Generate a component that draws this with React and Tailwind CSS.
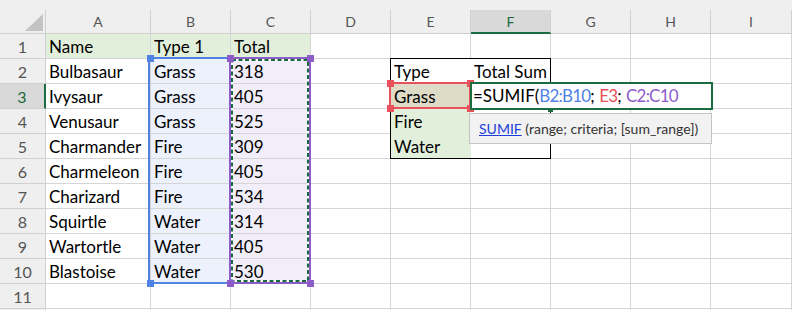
import React from 'react';

const COLS = ['A', 'B', 'C', 'D', 'E', 'F', 'G', 'H', 'I'];

const pokemon = [
  ['Name', 'Type 1', 'Total'],
  ['Bulbasaur', 'Grass', '318'],
  ['Ivysaur', 'Grass', '405'],
  ['Venusaur', 'Grass', '525'],
  ['Charmander', 'Fire', '309'],
  ['Charmeleon', 'Fire', '405'],
  ['Charizard', 'Fire', '534'],
  ['Squirtle', 'Water', '314'],
  ['Wartortle', 'Water', '405'],
  ['Blastoise', 'Water', '530'],
];

const summary = { '2-4': 'Type', '2-5': 'Total Sum', '3-4': 'Grass', '4-4': 'Fire', '5-4': 'Water' };

const cellInfo = (r, c) => {
  let text = '';
  if (r <= 10 && c <= 2) text = pokemon[r - 1][c];
  if (summary[`${r}-${c}`]) text = summary[`${r}-${c}`];

  let bg = 'bg-white';
  if (r === 1 && c <= 2) bg = 'bg-[#e2efda]';
  else if (c === 1 && r >= 2 && r <= 10) bg = 'bg-[#edf1fc]';
  else if (c === 2 && r >= 2 && r <= 10) bg = 'bg-[#f1eef9]';
  else if (c === 4 && r === 3) bg = 'bg-[#dedbc6]';
  else if (c === 4 && (r === 4 || r === 5)) bg = 'bg-[#e2efda]';

  const noGrid = (c === 4 || c === 5) && r >= 2 && r <= 5;
  return { text, bg, noGrid };
};

// selection frame centred on grid lines (x1,y1)-(x2,y2)
const Frame = ({ x1, y1, x2, y2, color, handles, children }) => (
  <>
    <div
      className={`absolute border-2 ${color.border}`}
      style={{ left: x1 - 1, top: y1 - 1, width: x2 - x1 + 2, height: y2 - y1 + 2 }}
    >
      {children}
    </div>
    {handles.map(([x, y], i) => (
      <div key={i} className={`absolute w-[7px] h-[7px] ${color.bg}`} style={{ left: x - 3, top: y - 3 }} />
    ))}
  </>
);

const Marquee = ({ w, h }) => (
  <svg className="absolute left-0 top-0" width={w} height={h}>
    <rect x="1" y="1" width={w - 2} height={h - 2} fill="none" stroke="#ffffff" strokeWidth="2" />
    <rect x="1" y="1" width={w - 2} height={h - 2} fill="none" stroke="#1a6a3d" strokeWidth="2" strokeDasharray="4 2.5" />
  </svg>
);

export default function App() {
  const rows = Array.from({ length: 12 }, (_, i) => i + 1);

  return (
    <div className="relative w-[792px] h-[310px] overflow-hidden bg-white font-['Lato',sans-serif] text-black">
      <div className="grid grid-cols-[46px_105px_repeat(7,80px)_81px]">
        {/* corner */}
        <div className="h-[34px] bg-[#efefef] flex flex-col">
          <div className="h-[10px]" />
          <div className="relative h-[24px] border-r border-b border-[#d0d0d0]">
            <svg className="absolute left-0 top-0" width="46" height="24">
              <polygon points="43,4 43,21 25,21" fill="#c3c3c3" />
            </svg>
          </div>
        </div>
        {COLS.map((col) => {
          const active = col === 'F';
          return (
            <div key={col} className="h-[34px] bg-[#efefef] flex flex-col">
              <div className="h-[10px]" />
              <div
                className={`h-[24px] flex items-center justify-center text-[14px] border-r border-r-[#d0d0d0] ${
                  active ? 'bg-[#d9d9d9] text-[#1d6b40] border-b-2 border-b-[#1d6b40]' : 'text-[#555555] border-b border-b-[#d0d0d0]'
                }`}
              >
                {col}
              </div>
            </div>
          );
        })}

        {rows.map((r) => (
          <React.Fragment key={r}>
            <div
              className={`h-[25px] flex items-end justify-center pb-[1px] text-[16px] leading-[21px] border-b border-b-[#d0d0d0] ${
                r === 3
                  ? 'bg-[#d9d9d9] text-[#1d6b40] border-r-2 border-r-[#1d6b40]'
                  : 'bg-[#efefef] text-[#555555] border-r border-r-[#d0d0d0]'
              }`}
            >
              {r <= 11 ? r : ''}
            </div>
            {COLS.map((col, c) => {
              const { text, bg, noGrid } = cellInfo(r, c);
              return (
                <div
                  key={col}
                  className={`h-[25px] flex items-end pl-[3px] pb-[1px] whitespace-nowrap text-[17px] leading-[21px] border-r border-b ${bg} ${
                    noGrid ? 'border-transparent' : 'border-[#d5d5d5]'
                  }`}
                >
                  {text}
                </div>
              );
            })}
          </React.Fragment>
        ))}
      </div>

      {/* E2:F5 outline */}
      <div className="absolute left-[390px] top-[58px] w-[161px] h-[101px] border border-black" />

      {/* B2:B10 reference */}
      <Frame
        x1={149}
        y1={58}
        x2={230}
        y2={283}
        color={{ border: 'border-[#4f82e3]', bg: 'bg-[#4f82e3]' }}
        handles={[[150, 58], [150, 283]]}
      />

      {/* C2:C10 reference with copy marquee */}
      <Frame
        x1={230}
        y1={58}
        x2={310}
        y2={283}
        color={{ border: 'border-[#8c5cc9]', bg: 'bg-[#8c5cc9]' }}
        handles={[[230, 58], [310, 58], [230, 283], [310, 283]]}
      >
        <Marquee w={78} h={223} />
      </Frame>

      {/* E3 criteria */}
      <Frame
        x1={390}
        y1={83}
        x2={470}
        y2={108}
        color={{ border: 'border-[#e8505b]', bg: 'bg-[#e8505b]' }}
        handles={[[390, 83], [470, 83], [390, 108], [470, 108]]}
      />

      {/* F3 editor */}
      <div className="absolute left-[470px] top-[82px] w-[243px] h-[28px] border-2 border-[#1d6b40] bg-white flex items-end pb-[2px] pl-[1px] whitespace-nowrap text-[17px] leading-[21px]">
        <span>=SUMIF(</span>
        <span className="text-[#4f82e3] tracking-[-0.8px]">B2:B10</span>
        <span>;&nbsp;</span>
        <span className="text-[#e8505b] tracking-[-0.8px]">E3</span>
        <span>;&nbsp;</span>
        <span className="text-[#8c5cc9] tracking-[-0.8px]">C2:C10</span>
      </div>
      <div className="absolute left-[548px] top-[108px] w-[5px] h-[4px] bg-[#1d6b40]" />

      {/* function hint */}
      <div className="absolute left-[469px] top-[113px] w-[243px] h-[31px] border border-[#c4c4c4] bg-[#f2f2f2] flex items-center pl-[9px] text-[14px] text-[#333333] whitespace-nowrap">
        <span className="text-[#1b3fdc] underline">SUMIF</span>
        <span>&nbsp;(range; criteria; [sum_range])</span>
      </div>
    </div>
  );
}
